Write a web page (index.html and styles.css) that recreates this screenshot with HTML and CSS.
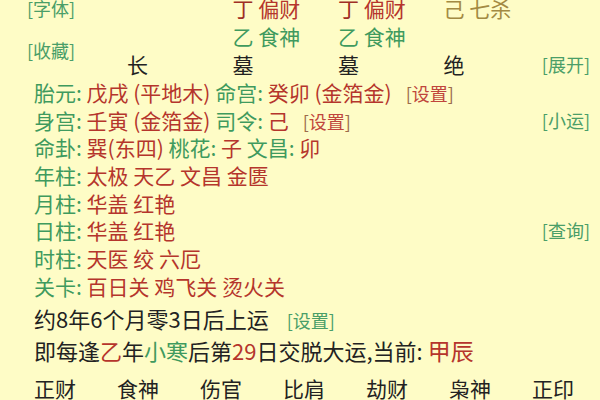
FILE: index.html
```html
<!DOCTYPE html>
<html lang="zh-CN">
<head>
    <meta charset="UTF-8">
    <meta name="viewport" content="width=device-width, initial-scale=1.0">
    <title>排盘</title>
    <link rel="stylesheet" href="styles.css">
</head>
<body>
    <div class="page">
        <!-- 十神 / 藏干 / 长生 -->
        <div class="top">
            <span class="link c1 r1">[字体]</span>
            <span class="link c1 r23">[收藏]</span>

            <span class="c3 r1"><span class="dark">丁</span> <span class="red">偏财</span></span>
            <span class="c4 r1"><span class="dark">丁</span> <span class="red">偏财</span></span>
            <span class="c5 r1 olive">己 七杀</span>

            <span class="c3 r2 green">乙 食神</span>
            <span class="c4 r2 green">乙 食神</span>

            <span class="c2 r3 black">长</span>
            <span class="c3 r3 black">墓</span>
            <span class="c4 r3 black">墓</span>
            <span class="c5 r3 black">绝</span>
            <span class="link c6 r3">[展开]</span>
        </div>

        <div class="info">
            <div class="row">
                <span><span class="green">胎元: </span><span class="red">戊戌 (平地木)</span> <span class="green">命宫: </span><span class="red">癸卯 (金箔金)</span><span class="set">[<b>设置</b>]</span></span>
            </div>
            <div class="row">
                <span><span class="green">身宫: </span><span class="red">壬寅 (金箔金)</span> <span class="green">司令: </span><span class="red">己</span><span class="set">[<b>设置</b>]</span></span>
                <span class="link">[小运]</span>
            </div>
            <div class="row">
                <span><span class="green">命卦: </span><span class="red">巽(东四)</span> <span class="green">桃花: </span><span class="red">子</span> <span class="green">文昌: </span><span class="red">卯</span></span>
            </div>
            <div class="row">
                <span><span class="green">年柱: </span><span class="red">太极 天乙 文昌 金匮</span></span>
            </div>
            <div class="row">
                <span><span class="green">月柱: </span><span class="red">华盖 红艳</span></span>
            </div>
            <div class="row">
                <span><span class="green">日柱: </span><span class="red">华盖 红艳</span></span>
                <span class="link">[查询]</span>
            </div>
            <div class="row">
                <span><span class="green">时柱: </span><span class="red">天医 绞 六厄</span></span>
            </div>
            <div class="row">
                <span><span class="green">关卡: </span><span class="red">百日关 鸡飞关 烫火关</span></span>
            </div>
        </div>

        <div class="yun">
            <div class="line">约8年6个月零3日后上运<span class="link">[设置]</span></div>
            <div class="line">即每逢<span class="red">乙</span>年<span class="green">小寒</span>后第<span class="red">29</span>日交脱大运,当前: <span class="red big">甲辰</span></div>
        </div>

        <div class="shen">
            <span>正财</span>
            <span>食神</span>
            <span>伤官</span>
            <span>比肩</span>
            <span>劫财</span>
            <span>枭神</span>
            <span>正印</span>
        </div>
    </div>
</body>
</html>
```

FILE: styles.css
```css
body {
    margin: 0;
    background-color: #fefcc6;
    font-family: "Noto Sans CJK SC", "Noto Sans", sans-serif;
    color: #222;
    overflow: hidden;
}
.page {
    width: 600px;
    height: 400px;
    overflow: hidden;
}
.green {
    color: #3f9a5e;
}
.red {
    color: #b5352c;
}
.dark {
    color: #9e2f25;
}
.olive {
    color: #a38a42;
}
.black {
    color: #222;
}
.link {
    color: #4a9e68;
    font-size: 18px;
    white-space: nowrap;
}

/* top grid */
.top {
    display: grid;
    grid-template-columns: 105px 105.5px 105.5px 105.5px minmax(0, 1fr) auto;
    grid-template-rows: 28px 28px 27px;
    margin-top: -6px;
    padding-left: 22px;
    padding-right: 10px;
    font-size: 21px;
    line-height: 28px;
    white-space: nowrap;
}
.top .link {
    padding-left: 5px;
}
.c1 { grid-column: 1; }
.c2 { grid-column: 2; }
.c3 { grid-column: 3; }
.c4 { grid-column: 4; }
.c5 { grid-column: 5; }
.c6 { grid-column: 6; justify-self: end; }
.r1 { grid-row: 1; }
.r2 { grid-row: 2; }
.r3 { grid-row: 3; }
.r23 {
    grid-row: 2 / 4;
    align-self: center;
}

/* info rows */
.info {
    padding: 1px 10px 0 34px;
    font-size: 21px;
}
.row {
    display: flex;
    justify-content: space-between;
    align-items: center;
    height: 27.7px;
    white-space: nowrap;
}
.set {
    margin-left: 14px;
    font-size: 18px;
    color: #9c6a4a;
}
.set b {
    font-weight: normal;
    color: #c0453c;
}

/* 大运 */
.yun {
    padding-left: 34px;
    margin-top: 2px;
}
.line {
    height: 32px;
    line-height: 32px;
    font-size: 22px;
    white-space: nowrap;
}
.line .link {
    margin-left: 18px;
    font-size: 18px;
}
.big {
    font-size: 23px;
}

.shen {
    display: grid;
    grid-template-columns: repeat(7, 83px);
    padding-left: 34px;
    margin-top: 4px;
    height: 36px;
    line-height: 36px;
    font-size: 21px;
}
```
